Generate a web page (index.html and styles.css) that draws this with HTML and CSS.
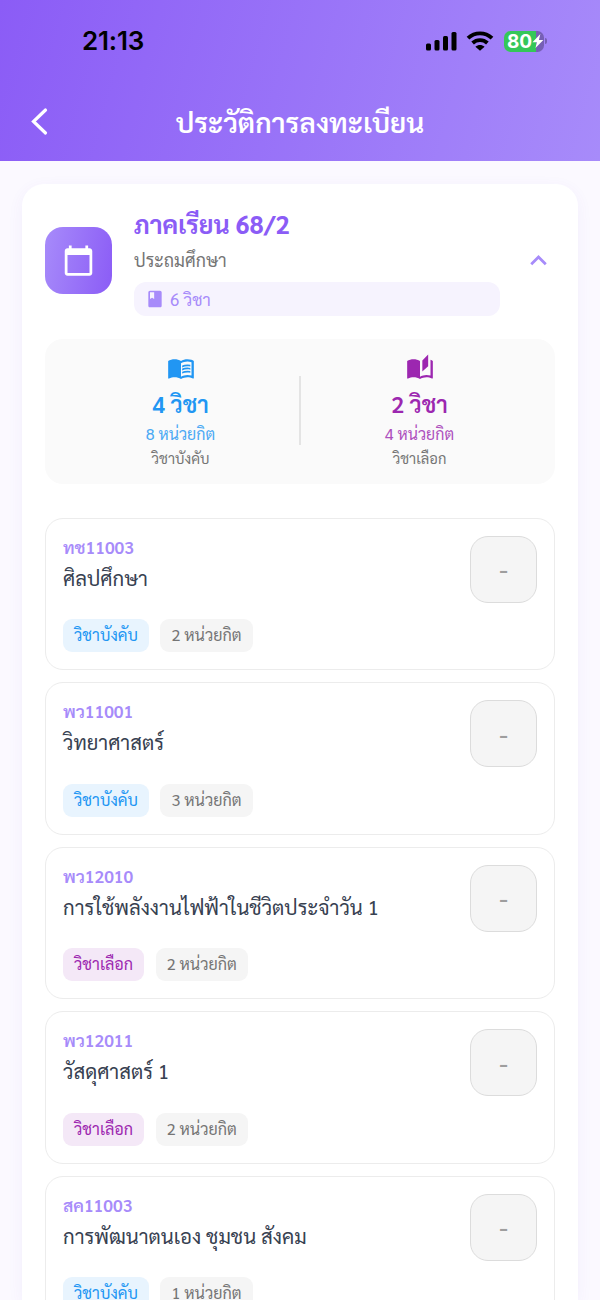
FILE: index.html
```html
<!DOCTYPE html>
<html lang="th">
<head>
<meta charset="utf-8">
<title>ประวัติการลงทะเบียน</title>
<link rel="stylesheet" href="styles.css">
</head>
<body>
<header class="top">
  <div class="status">
    <span class="time">21:13</span>
    <div class="status-icons">
      <svg class="signal" width="31" height="20" viewBox="0 0 31 20"><rect x="0" y="12.5" width="5" height="7" rx="1.5"/><rect x="8.5" y="9" width="5" height="10.500" rx="1.5"/><rect x="17" y="5" width="5" height="14.500" rx="1.5"/><rect x="25.5" y="1" width="5" height="18.500" rx="1.5"/></svg>
      <svg class="wifi" width="28" height="20" viewBox="0 0 28 20"><path d="M2 7.200C8.800.8 19.200.8 26 7.200M6.600 12c4.300-3.900 10.500-3.900 14.800 0" fill="none" stroke="#000" stroke-width="3.900"/><path d="M9.400 15.700c2.700-2.300 6.500-2.300 9.200 0L14 19.800z"/></svg>
      <div class="battery"><span class="level">80</span><svg class="bolt" width="12" height="16" viewBox="0 0 12 16"><path d="M8.500 1 .5 9.200h4.500L3.500 15 11.500 7H7z" fill="#fff"/></svg></div>
    </div>
  </div>
  <nav class="nav">
    <svg class="back" width="24" height="30" viewBox="0 0 24 30"><path d="M18.500 4 6.500 15.500l12 11.500" fill="none" stroke="#fff" stroke-width="3.200" stroke-linecap="round" stroke-linejoin="miter"/></svg>
    <h1 class="title">ประวัติการลงทะเบียน</h1>
  </nav>
</header>
<main class="card">
  <section class="term">
    <div class="term-icon"><svg width="33" height="33" viewBox="0 0 24 24"><path fill="#fff" d="M20 3h-1V1h-2v2H7V1H5v2H4c-1.100 0-2 .9-2 2v16c0 1.100.9 2 2 2h16c1.100 0 2-.9 2-2V5c0-1.100-.9-2-2-2zm0 18H4V8h16v13z"/></svg></div>
    <div class="term-info">
      <h2 class="term-title">ภาคเรียน 68/2</h2>
      <p class="level-name">ประถมศึกษา</p>
      <div class="count"><svg width="20" height="20" viewBox="0 0 24 24"><path fill="#a78bfa" d="M18 2H6c-1.100 0-2 .9-2 2v16c0 1.100.9 2 2 2h12c1.100 0 2-.9 2-2V4c0-1.100-.9-2-2-2zM6 4h5v8l-2.500-1.500L6 12V4z"/></svg><span>6 วิชา</span></div>
    </div>
    <svg class="chevron" width="33" height="33" viewBox="0 0 24 24"><path fill="#a78bfa" d="M12 8l-6 6 1.410 1.410L12 10.830l4.590 4.580L18 14z"/></svg>
  </section>
  <section class="summary">
    <div class="stat required">
      <svg width="28" height="28" viewBox="0 0 24 24"><path fill="currentColor" d="M21 5c-1.110-.35-2.330-.5-3.500-.5-1.950 0-4.050.4-5.500 1.500-1.450-1.100-3.550-1.500-5.500-1.500S2.450 4.900 1 6v14.650c0 .25.25.5.5.5.1 0 .15-.05.25-.05C3.100 20.450 5.050 20 6.500 20c1.950 0 4.050.4 5.500 1.500 1.350-.85 3.800-1.500 5.500-1.500 1.650 0 3.350.3 4.750 1.050.1.050.15.050.25.050.25 0 .5-.25.5-.5V6c-.6-.45-1.250-.75-2-1zm0 13.500c-1.100-.35-2.300-.5-3.500-.5-1.700 0-4.150.65-5.500 1.500V8c1.350-.85 3.800-1.500 5.500-1.500 1.200 0 2.400.15 3.500.5v11.500z"/><path fill="currentColor" d="M17.500 10.500c.88 0 1.730.09 2.500.26V9.240a12 12 0 0 0-2.500-.24c-1.700 0-3.240.29-4.500.83v1.660a10.600 10.600 0 0 1 4.500-.99zM13 12.490v1.660a10.600 10.600 0 0 1 4.500-.99c.88 0 1.730.09 2.500.26V11.900a12 12 0 0 0-2.500-.24c-1.700 0-3.240.3-4.500.83zM17.500 14.330c-1.700 0-3.240.29-4.500.83v1.660a10.600 10.600 0 0 1 4.500-.99c.88 0 1.730.09 2.500.26v-1.520a12 12 0 0 0-2.500-.24z"/></svg>
      <strong>4 วิชา</strong><em>8 หน่วยกิต</em><small>วิชาบังคับ</small>
    </div>
    <div class="divider"></div>
    <div class="stat elective">
      <svg width="28" height="28" viewBox="0 0 24 24"><path fill="currentColor" d="m19 .5-5 5V15l5-4.500V.5zM1 6v14.650c0 .25.25.5.5.5.1 0 .15-.05.25-.05C3.100 20.450 5.050 20 6.500 20c1.950 0 4.050.4 5.500 1.500V6c-1.450-1.100-3.550-1.500-5.500-1.500S2.450 4.900 1 6zm22 13.500V6c-.6-.45-1.250-.75-2-1v13.500c-1.100-.35-2.300-.5-3.500-.5-1.700 0-4.150.65-5.500 1.500v2c1.350-.85 3.800-1.500 5.500-1.500 1.650 0 3.350.3 4.750 1.050.1.050.15.050.25.050.25 0 .5-.25.5-.5v-1.100z"/></svg>
      <strong>2 วิชา</strong><em>4 หน่วยกิต</em><small>วิชาเลือก</small>
    </div>
  </section>
  <section class="subjects">
    <article class="subject"><div class="details"><p class="code">ทช11003</p><h3 class="name">ศิลปศึกษา</h3><div class="tags"><span class="tag required">วิชาบังคับ</span><span class="tag">2 หน่วยกิต</span></div></div><div class="grade">-</div></article>
    <article class="subject"><div class="details"><p class="code">พว11001</p><h3 class="name">วิทยาศาสตร์</h3><div class="tags"><span class="tag required">วิชาบังคับ</span><span class="tag">3 หน่วยกิต</span></div></div><div class="grade">-</div></article>
    <article class="subject"><div class="details"><p class="code">พว12010</p><h3 class="name">การใช้พลังงานไฟฟ้าในชีวิตประจำวัน 1</h3><div class="tags"><span class="tag elective">วิชาเลือก</span><span class="tag">2 หน่วยกิต</span></div></div><div class="grade">-</div></article>
    <article class="subject"><div class="details"><p class="code">พว12011</p><h3 class="name">วัสดุศาสตร์ 1</h3><div class="tags"><span class="tag elective">วิชาเลือก</span><span class="tag">2 หน่วยกิต</span></div></div><div class="grade">-</div></article>
    <article class="subject"><div class="details"><p class="code">สค11003</p><h3 class="name">การพัฒนาตนเอง ชุมชน สังคม</h3><div class="tags"><span class="tag required">วิชาบังคับ</span><span class="tag">1 หน่วยกิต</span></div></div><div class="grade">-</div></article>
  </section>
</main>
</body>
</html>
```
FILE: styles.css
```css
* { box-sizing: border-box; margin: 0; padding: 0; }
html { height: 1300px; overflow: hidden; }
body { height: 1300px; overflow: hidden; background: #fbf9ff; font-family: "Sarabun", "Noto Sans Thai Looped", "Noto Sans", "Noto Sans Thai", "Loma", sans-serif; color: #374151; white-space: nowrap; }
.top { height: 160.500px; background: linear-gradient(105deg, #8b5cf6, #a78bfa); }
.status { height: 82px; padding: 0 56px 0 82px; display: flex; align-items: center; justify-content: space-between; }
.time { font: 600 26px/30px Inter, sans-serif; letter-spacing: -0.2px; color: #000; }
.status-icons { display: flex; align-items: center; }
.wifi { margin-left: 9.500px; }
.battery { position: relative; margin-left: 10px; width: 40px; height: 21px; border-radius: 6.500px; background: linear-gradient(90deg, #34c759 32px, #765fb5 32px); display: flex; align-items: center; padding-left: 3px; }
.battery::after { content: ""; position: absolute; left: 41px; top: 7.500px; width: 2px; height: 6px; border-radius: 0 2px 2px 0; background: #765fb5; }
.level { font: 700 19px/21px Inter, sans-serif; color: #fff; }
.nav { display: grid; grid-template-columns: 24px 1fr 24px; align-items: center; height: 78px; padding: 0 27px; }
.title { text-align: center; font-size: 27.900px; line-height: 40px; font-weight: 600; color: #fff; }
.card { margin: 23px 22px 0; padding: 21px 23px 0; height: 1116.500px; background: #fff; border-radius: 22px 22px 0 0; box-shadow: 0 4px 16px rgba(100, 70, 200, 0.06); }
.term { display: flex; align-items: center; height: 111px; }
.term-icon { width: 67px; height: 67px; border-radius: 18px; background: linear-gradient(100deg, #a78bfa, #8b5cf6); display: flex; align-items: center; justify-content: center; }
.term-info { width: 366px; margin-left: 22px; }
.term-title { height: 42px; line-height: 38px; font-size: 25px; font-weight: 700; color: #8b5cf6; }
.level-name { height: 35px; line-height: 25px; font-size: 17.800px; color: #757575; }
.count { height: 34px; border-radius: 12px; background: #f6f3fe; color: #a78bfa; font-size: 17px; display: flex; align-items: center; gap: 5px; padding-left: 11px; }
.chevron { margin-left: 22px; }
.summary { margin-top: 23px; height: 145px; border-radius: 18px; background: #fafafa; display: grid; grid-template-columns: 1fr 2px 1fr; justify-items: center; align-items: start; padding: 0 17px; }
.divider { width: 2px; height: 69px; margin-top: 37px; background: #e4e4e4; }
.stat { display: flex; flex-direction: column; align-items: center; padding-top: 15px; }
.stat.required { color: #2196f3; }
.stat.elective { color: #9c27b0; }
.stat strong { font-size: 23px; line-height: 38px; height: 38px; font-weight: 600; margin-top: 2px; }
.stat em { font-style: normal; font-size: 16px; line-height: 24px; opacity: .8; }
.stat small { font-size: 14.700px; line-height: 24px; color: #757575; }
.subjects { margin-top: 34px; display: flex; flex-direction: column; gap: 12.100px; }
.subject { height: 152.500px; border: 1px solid #ececec; border-radius: 18px; padding: 17px; display: flex; justify-content: space-between; align-items: flex-start; }
.code { font-size: 17.300px; line-height: 23px; font-weight: 600; color: #a78bfa; }
.name { font-size: 20.300px; line-height: 37px; font-weight: 400; color: #374151; }
.tags { display: flex; gap: 11.500px; margin-top: 23.500px; }
.tag { height: 33px; line-height: 32px; padding: 0 11px; border-radius: 9px; background: #f5f5f5; color: #757575; font-size: 16.200px; }
.tag.required { background: #e8f4fe; color: #2196f3; }
.tag.elective { background: #f4e8f7; color: #9c27b0; }
.grade { width: 67px; height: 67px; border: 1.500px solid #dcdcdc; border-radius: 18px; background: #f5f5f5; display: flex; align-items: center; justify-content: center; font-size: 24px; line-height: 30px; padding-bottom: 2px; font-weight: 700; color: #9e9e9e; }
```
